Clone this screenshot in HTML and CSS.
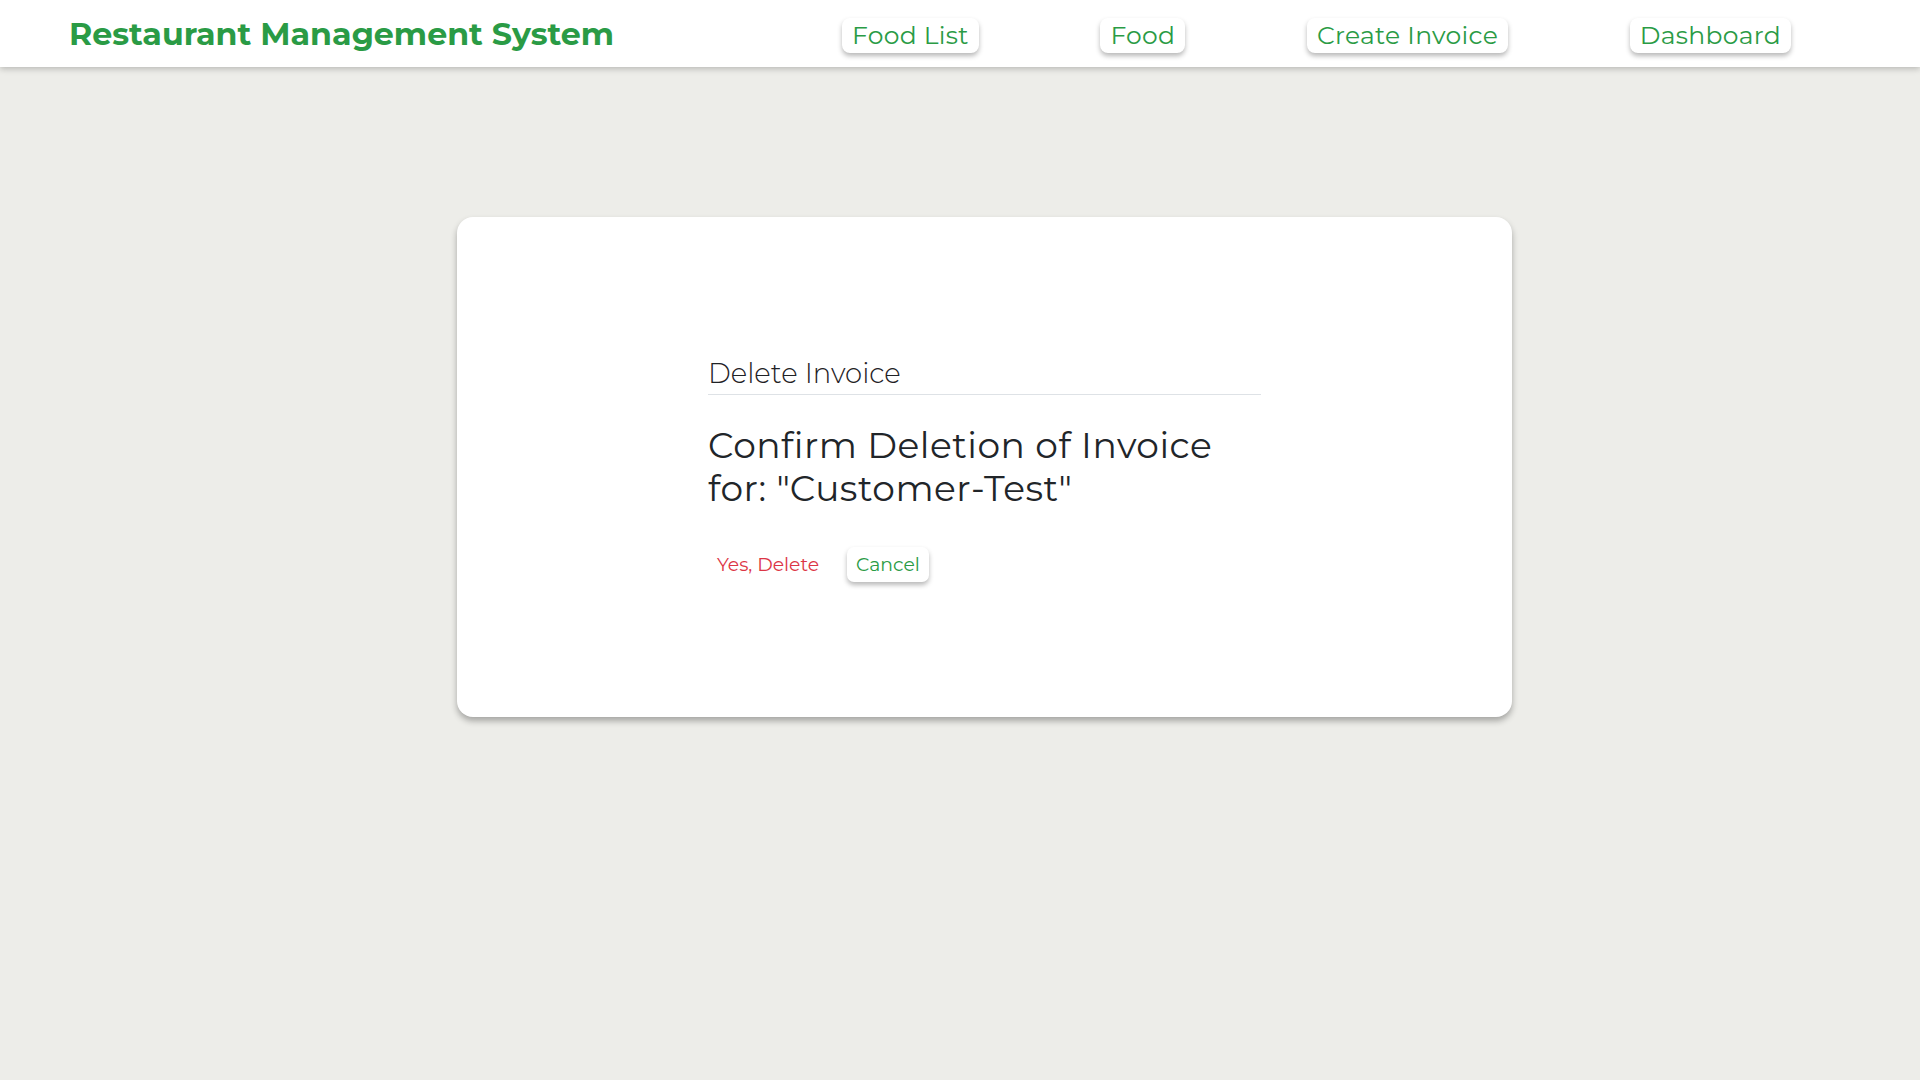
FILE: index.html
```html
<!DOCTYPE html>
<html lang="en">
<head>
<meta charset="utf-8">
<title>Restaurant Management System</title>
<link rel="stylesheet" href="styles.css">
</head>
<body>
<header class="topbar">
  <h1 class="brand">Restaurant Management System</h1>
  <nav class="nav">
    <a class="nav-btn" href="#">Food List</a>
    <a class="nav-btn" href="#">Food</a>
    <a class="nav-btn" href="#">Create Invoice</a>
    <a class="nav-btn" href="#">Dashboard</a>
  </nav>
</header>
<main class="page">
  <section class="card">
    <div class="confirm">
      <h2 class="confirm-label">Delete Invoice</h2>
      <h3 class="confirm-title">Confirm Deletion of Invoice for: "Customer-Test"</h3>
      <div class="actions">
        <button class="btn btn-danger" type="button">Yes, Delete</button>
        <button class="btn btn-cancel" type="button">Cancel</button>
      </div>
    </div>
  </section>
</main>
</body>
</html>
```

FILE: styles.css
```css
* { box-sizing: border-box; }

html, body {
  margin: 0;
  padding: 0;
}

body {
  background: #edede9;
  font-family: "Montserrat", "Inter", "Open Sans", sans-serif;
  color: #212529;
  min-height: 1080px;
}

.topbar {
  height: 67px;
  background: #ffffff;
  display: flex;
  align-items: center;
  padding: 0 129px 0 69px;
  box-shadow: 0 2px 6px rgba(0, 0, 0, 0.22);
  position: relative;
}

.brand {
  margin: 0;
  font-size: 31.7px;
  font-weight: 700;
  color: #2a9b45;
  flex: 1 1 auto;
  white-space: nowrap;
}

.nav {
  flex: 0 0 949px;
  display: flex;
  justify-content: space-between;
  align-items: center;
  margin-top: 4px;
}

.nav-btn {
  display: block;
  height: 35px;
  line-height: 35px;
  padding: 0 10px;
  font-size: 25px;
  font-weight: 400;
  color: #2a9b45;
  text-decoration: none;
  background: #ffffff;
  border-radius: 8px;
  box-shadow: 0 3px 5px rgba(0, 0, 0, 0.28);
  letter-spacing: 0.3px;
}

.page {
  padding: 150px 408px 0 457px;
}

.card {
  height: 500px;
  padding-top: 4px;
  background: #ffffff;
  border-radius: 16px;
  box-shadow: 0 4px 6px rgba(0, 0, 0, 0.3);
  display: flex;
  align-items: center;
  justify-content: center;
}

.confirm {
  width: 553px;
}

.confirm-label {
  margin: 0;
  font-size: 27.5px;
  font-weight: 300;
  line-height: 34px;
  padding-bottom: 4px;
  border-bottom: 1px solid #dee2e6;
  color: #1f2226;
}

.confirm-title {
  margin: 29px 0 0;
  font-size: 36px;
  font-weight: 400;
  line-height: 43px;
  letter-spacing: 0.5px;
}

.actions {
  margin-top: 37px;
  display: flex;
  align-items: center;
  gap: 19px;
}

.btn {
  font-family: inherit;
  font-size: 18.8px;
  height: 35px;
  line-height: 35px;
  padding: 0 9px;
  border: none;
  border-radius: 7px;
  background: transparent;
  cursor: pointer;
}

.btn-danger {
  color: #dc3545;
}

.btn-cancel {
  color: #2a9b45;
  background: #ffffff;
  box-shadow: 0 3px 5px rgba(0, 0, 0, 0.28);
}
```
